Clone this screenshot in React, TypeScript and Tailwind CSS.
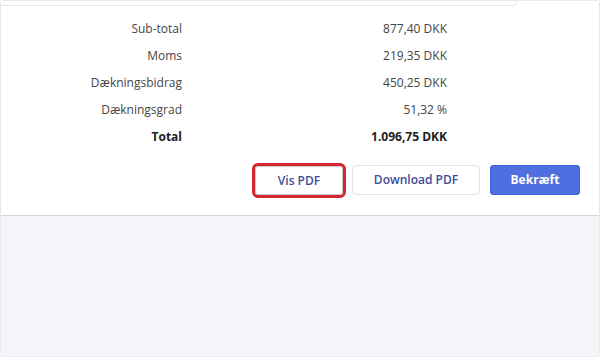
import React from 'react';

const rows = [
  { label: 'Sub-total', value: '877,40 DKK' },
  { label: 'Moms', value: '219,35 DKK' },
  { label: 'Dækningsbidrag', value: '450,25 DKK' },
  { label: 'Dækningsgrad', value: '51,32 %' },
];

export default function App() {
  return (
    <div className="w-[600px] h-[358px] bg-white font-['Open_Sans',sans-serif]">
      <div className="w-[600px] h-[357px] bg-[#f4f5f9] border border-[#ece9f0] rounded-[3px] flex flex-col">
        {/* summary card */}
        <div className="bg-white h-[214px] shadow-[0_1px_1px_rgba(0,0,0,0.12)] flex flex-col">
          <div className="h-[5px] w-[516px] border-b border-r border-[#e6e7ee] rounded-br-[4px]" />

          <div className="pt-[9px] flex flex-col">
            {rows.map((r) => (
              <div key={r.label} className="h-[27px] flex items-center text-[12px] text-[#454545]">
                <span className="w-[181px] text-right">{r.label}</span>
                <span className="w-[265px] text-right">{r.value}</span>
              </div>
            ))}
            <div className="h-[27px] flex items-center text-[12px] font-bold text-[#222]">
              <span className="w-[181px] text-right">Total</span>
              <span className="w-[265px] text-right">1.096,75 DKK</span>
            </div>
          </div>

          <div className="mt-[15px] flex justify-end gap-[9px] pr-[19px]">
            <button className="w-[88px] h-[29px] mt-[1px] rounded-[3px] border border-[#c9ccd6] bg-white text-[12px] font-semibold text-[#3d4c9b] outline-[3px] outline-offset-[0px] outline-[#d4262c] outline-solid">
              Vis PDF
            </button>
            <button className="w-[128px] h-[30px] rounded-[3px] border border-[#e3e5ec] bg-white text-[12px] font-semibold text-[#3d4c9b]">
              Download PDF
            </button>
            <button className="w-[90px] h-[30px] ml-[1px] rounded-[3px] border border-[#4462d6] bg-[#4f6ee0] text-[12px] font-bold text-white">
              Bekræft
            </button>
          </div>
        </div>
      </div>
    </div>
  );
}
